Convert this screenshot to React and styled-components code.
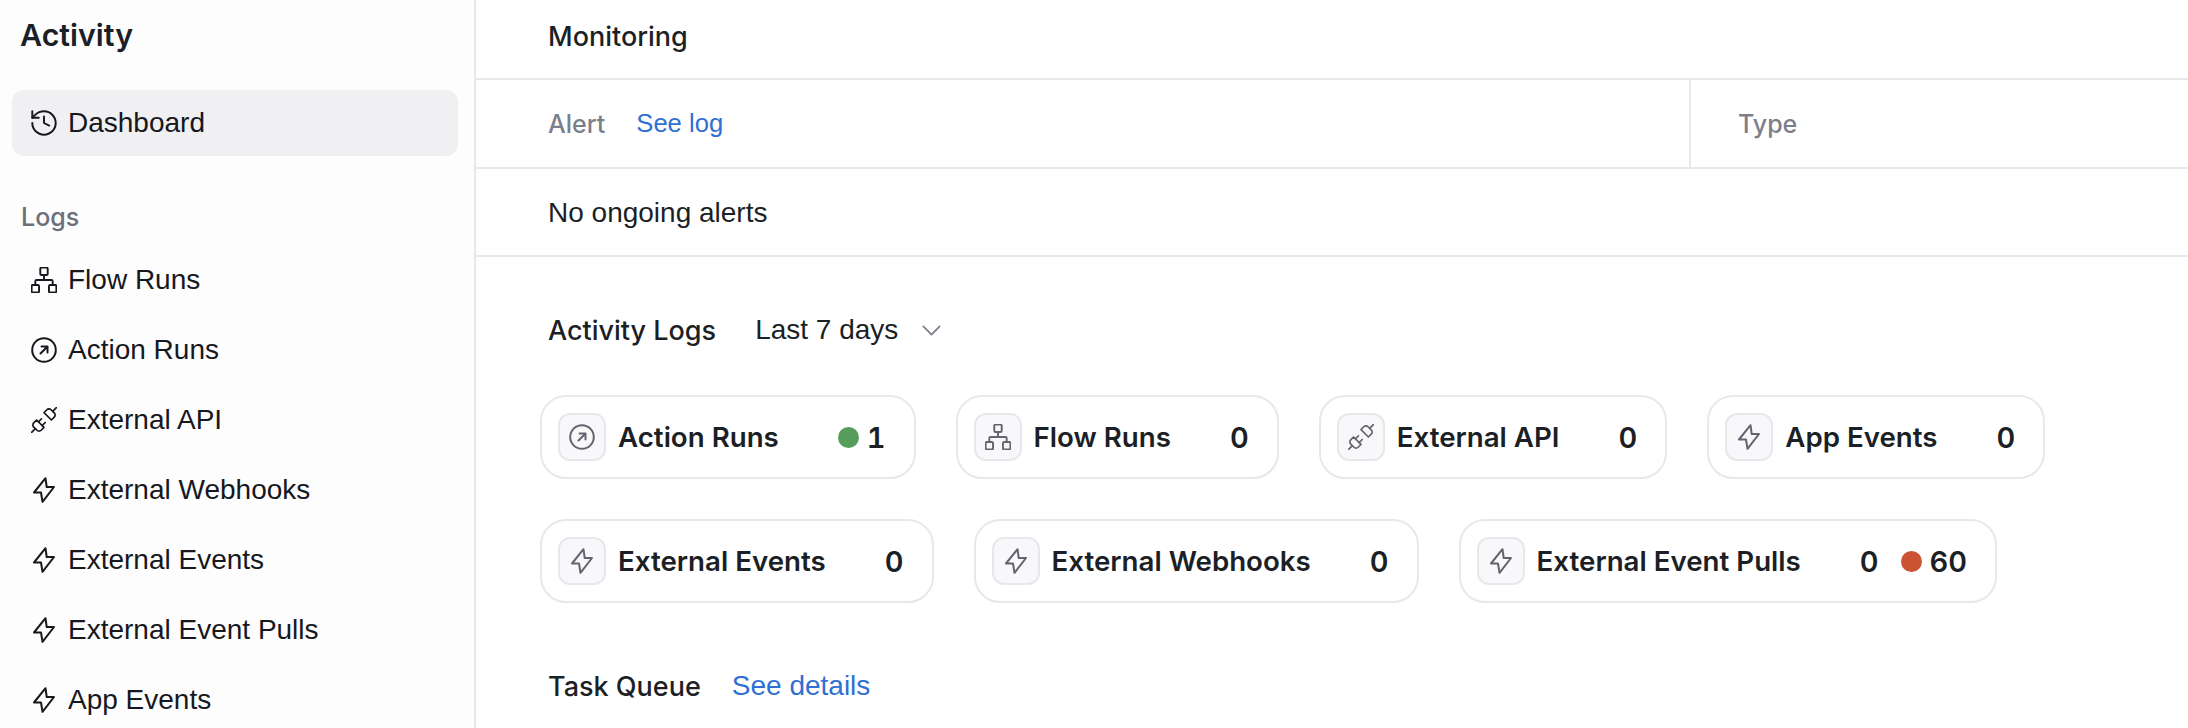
import React from "react";
import styled, { createGlobalStyle } from "styled-components";
import { ChevronDown, History, Network, Unplug } from "lucide-react";

const GlobalStyle = createGlobalStyle`
  html, body {
    margin: 0;
    padding: 0;
    background: #ffffff;
    overflow: hidden;
  }
  body {
    font-family: "Liberation Sans", Arial, sans-serif;
    color: #1c1f25;
  }
  * {
    box-sizing: border-box;
  }
`;

const Page = styled.div`
  display: flex;
  width: 2188px;
  height: 728px;
  overflow: hidden;
`;

const Sidebar = styled.aside`
  width: 476px;
  flex-shrink: 0;
  height: 100%;
  padding: 0 16px 0 12px;
  background: #fdfdfd;
  border-right: 2px solid #e8e8ec;
`;

const SidebarTitle = styled.h1`
  margin: 0 0 18px;
  height: 72px;
  padding: 0 0 2px 8px;
  display: flex;
  align-items: center;
  font-family: Inter, sans-serif;
  font-size: 30.4px;
  font-weight: 600;
  color: #1c1f25;
`;

const NavGroupLabel = styled.div`
  height: 36px;
  margin: 43px 0 12px;
  padding-left: 9px;
  display: flex;
  align-items: center;
  font-family: Inter, sans-serif;
  font-size: 25px;
  font-weight: 500;
  color: #6b6f7a;
`;

const NavList = styled.nav`
  display: flex;
  flex-direction: column;
  gap: 4px;
`;

const NavItem = styled.a`
  display: flex;
  align-items: center;
  gap: 11px;
  height: 66px;
  padding-left: 19px;
  border-radius: 12px;
  font-size: 28px;
  color: #16181d;
  background: ${({ $active }) => ($active ? "#f0f0f3" : "transparent")};

  svg {
    width: 26px;
    height: 26px;
    flex-shrink: 0;
  }
`;

const Main = styled.main`
  flex: 1;
  min-width: 0;
`;

const Row = styled.div`
  display: flex;
  align-items: center;
  height: ${({ $height }) => $height}px;
  padding: ${({ $drop }) => $drop || 0}px 0 ${({ $lift }) => $lift || 0}px 72px;
  border-bottom: 2px solid #e8e8ec;
  font-size: 28px;
`;

const RowTitle = styled.span`
  font-weight: 500;
  font-family: Inter, sans-serif;
  font-size: 27px;
`;

const HeadCell = styled.div`
  display: flex;
  align-items: center;
  gap: 31px;
  height: 100%;
  width: ${({ $width }) => ($width ? `${$width}px` : "auto")};
  padding-left: ${({ $inset }) => $inset || 0}px;
  border-left: ${({ $divided }) => ($divided ? "2px solid #e8e8ec" : "none")};
  font-size: 25.6px;
`;

const MutedLabel = styled.span`
  font-family: Inter, sans-serif;
  font-size: 25px;
  font-weight: 500;
  color: #7c7f89;
`;

const TextLink = styled.a`
  color: #2f70d2;
`;

const Section = styled.section`
  padding: 0 0 0 64px;
`;

const SectionHead = styled.div`
  display: flex;
  align-items: center;
  height: 50px;
  padding-left: 8px;
  font-size: 28px;
`;

const ActivityHead = styled(SectionHead)`
  margin: 48px 0 40px;
`;

const SectionTitle = styled.span`
  font-family: Inter, sans-serif;
  font-size: 27px;
  font-weight: 500;
`;

const RangeSelect = styled.div`
  display: flex;
  align-items: center;
  gap: 24px;
  margin-left: 39px;
  color: #1c1f25;

  svg {
    width: 19px;
    height: 11px;
    color: #7c7f89;
  }
`;

const CardRow = styled.div`
  display: flex;
  gap: 40px;
  margin-bottom: 40px;
`;

const Card = styled.div`
  display: flex;
  align-items: center;
  gap: 12px;
  height: 84px;
  padding: 0 28px 0 16px;
  border: 2px solid #e8e8ec;
  border-radius: 26px;
  background: #ffffff;
`;

const IconBox = styled.div`
  display: flex;
  align-items: center;
  justify-content: center;
  width: 48px;
  height: 48px;
  border: 2px solid #e8e8ec;
  border-radius: 12px;
  background: #f8f8fa;
  color: #62656f;

  svg {
    width: 26px;
    height: 26px;
  }
`;

const CardLabel = styled.span`
  font-family: Inter, sans-serif;
  font-size: 27.7px;
  font-weight: 600;
  color: #1c1f25;
`;

const Counts = styled.div`
  display: flex;
  align-items: center;
  gap: 22px;
  margin-left: 47px;
  font-family: Inter, sans-serif;
  font-size: 29px;
  font-weight: 600;
  font-variant-numeric: tabular-nums;
`;

const Status = styled.span`
  display: flex;
  align-items: center;
  gap: 8px;
`;

const Dot = styled.i`
  display: block;
  width: 21px;
  height: 21px;
  border-radius: 50%;
  background: ${({ $color }) => $color};
`;

const TaskQueueHead = styled(SectionHead)`
  gap: 31px;
  margin-top: 58px;
`;

// lightning outline used for the event rows
const Bolt = () => (
  <svg viewBox="0 0 26 26" fill="none" stroke="currentColor" strokeWidth="2" strokeLinejoin="round" strokeLinecap="round">
    <path d="M14.5 1.2 3 15.5h7l1.5 9.3L23 10h-7.3l-1.2-8.8Z" />
  </svg>
);

const RunIcon = () => (
  <svg viewBox="0 0 26 26" fill="none" stroke="currentColor" strokeWidth="2" strokeLinejoin="round" strokeLinecap="round">
    <circle cx="13" cy="13" r="11.8" />
    <path d="M9.5 16.5 16.5 9.5M10.5 9.5h6v6" />
  </svg>
);

// lucide glyphs cropped so that they fill the 26px icon square
const FlowIcon = () => <Network viewBox="1.5 1.5 21 21" strokeWidth={1.55} />;
const PlugIcon = () => <Unplug viewBox="1.5 1.5 21 21" strokeWidth={1.35} />;
const DashIcon = () => <History viewBox="2 2 20 20" strokeWidth={1.5} />;

const navItems = [
  { label: "Flow Runs", icon: <FlowIcon /> },
  { label: "Action Runs", icon: <RunIcon /> },
  { label: "External API", icon: <PlugIcon /> },
  { label: "External Webhooks", icon: <Bolt /> },
  { label: "External Events", icon: <Bolt /> },
  { label: "External Event Pulls", icon: <Bolt /> },
  { label: "App Events", icon: <Bolt /> },
];

const cardRows = [
  [
    { label: "Action Runs", icon: <RunIcon />, status: { color: "#569c5a", value: 1 } },
    { label: "Flow Runs", icon: <FlowIcon />, count: 0 },
    { label: "External API", icon: <PlugIcon />, count: 0 },
    { label: "App Events", icon: <Bolt />, count: 0 },
  ],
  [
    { label: "External Events", icon: <Bolt />, count: 0 },
    { label: "External Webhooks", icon: <Bolt />, count: 0 },
    { label: "External Event Pulls", icon: <Bolt />, count: 0, status: { color: "#cb5232", value: 60 } },
  ],
];

const App = () => {
  return (
    <Page>
      <GlobalStyle />
      <Sidebar>
        <SidebarTitle>Activity</SidebarTitle>
        <NavItem $active>
          <DashIcon />
          Dashboard
        </NavItem>
        <NavGroupLabel>Logs</NavGroupLabel>
        <NavList>
          {navItems.map((item) => (
            <NavItem key={item.label}>
              {item.icon}
              {item.label}
            </NavItem>
          ))}
        </NavList>
      </Sidebar>
      <Main>
        <Row $height={80} $lift={6}>
          <RowTitle>Monitoring</RowTitle>
        </Row>
        <Row $height={89}>
          <HeadCell $width={1141}>
            <MutedLabel>Alert</MutedLabel>
            <TextLink>See log</TextLink>
          </HeadCell>
          <HeadCell $divided $inset={47}>
            <MutedLabel>Type</MutedLabel>
          </HeadCell>
        </Row>
        <Row $height={88} $drop={1}>No ongoing alerts</Row>
        <Section>
          <ActivityHead>
            <SectionTitle>Activity Logs</SectionTitle>
            <RangeSelect>
              Last 7 days
              <ChevronDown viewBox="5 8 14 8" strokeWidth={1.3} />
            </RangeSelect>
          </ActivityHead>
          {cardRows.map((cards, i) => (
            <CardRow key={i}>
              {cards.map((card) => (
                <Card key={card.label}>
                  <IconBox>{card.icon}</IconBox>
                  <CardLabel>{card.label}</CardLabel>
                  <Counts>
                    {card.count !== undefined && <span>{card.count}</span>}
                    {card.status && (
                      <Status>
                        <Dot $color={card.status.color} />
                        {card.status.value}
                      </Status>
                    )}
                  </Counts>
                </Card>
              ))}
            </CardRow>
          ))}
          <TaskQueueHead>
            <SectionTitle>Task Queue</SectionTitle>
            <TextLink>See details</TextLink>
          </TaskQueueHead>
        </Section>
      </Main>
    </Page>
  );
};

export default App;
